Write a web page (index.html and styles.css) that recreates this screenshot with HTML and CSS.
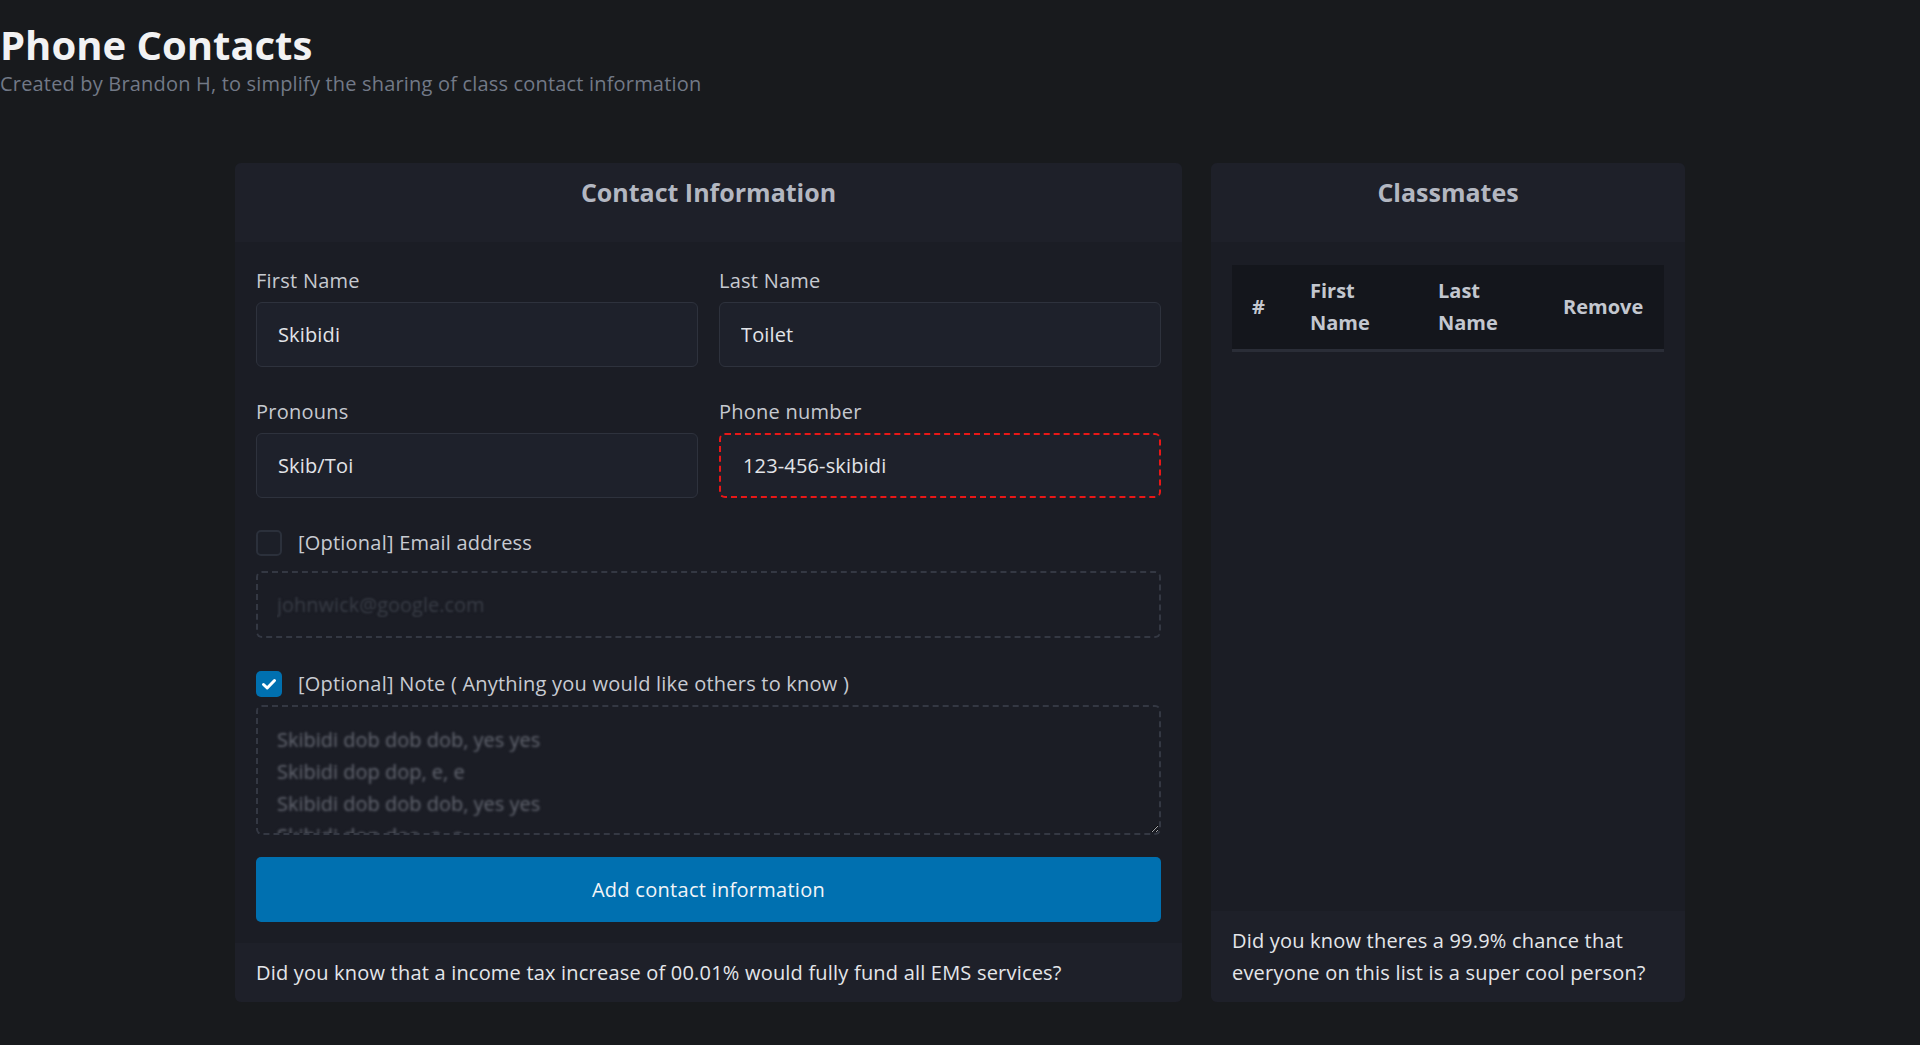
FILE: index.html
```html
<!DOCTYPE html>
<html lang="en">
<head>
<meta charset="utf-8">
<title>Phone Contacts</title>
<link rel="stylesheet" href="styles.css">
</head>
<body>
<header class="page-head">
  <h1 class="page-title">Phone Contacts</h1>
  <p class="page-sub">Created by Brandon H, to simplify the sharing of class contact information</p>
</header>
<main class="cards">
  <section class="card">
    <div class="card-head"><h2 class="card-title">Contact Information</h2></div>
    <form class="card-body form-body">
      <div class="grid2">
        <div class="field">
          <label class="field-label">First Name</label>
          <input class="text-input" type="text" value="Skibidi">
        </div>
        <div class="field">
          <label class="field-label">Last Name</label>
          <input class="text-input" type="text" value="Toilet">
        </div>
      </div>
      <div class="grid2 row-gap">
        <div class="field">
          <label class="field-label">Pronouns</label>
          <input class="text-input" type="text" value="Skib/Toi">
        </div>
        <div class="field">
          <label class="field-label">Phone number</label>
          <input class="text-input invalid" type="text" value="123-456-skibidi">
        </div>
      </div>
      <div class="check-row check-email">
        <span class="check-box"></span>
        <span class="check-label">[Optional] Email address</span>
      </div>
      <input class="dashed-input" type="text" placeholder="johnwick@google.com" disabled>
      <div class="check-row check-note">
        <span class="check-box checked">
          <svg viewBox="0 0 26 26" width="26" height="26"><polyline points="7.5,13.5 11.2,17 18.5,9.5" fill="none" stroke="#fff" stroke-width="3" stroke-linecap="round" stroke-linejoin="round"/></svg>
        </span>
        <span class="check-label">[Optional] Note ( Anything you would like others to know )</span>
      </div>
      <textarea class="dashed-area">Skibidi dob dob dob, yes yes
Skibidi dop dop, e, e
Skibidi dob dob dob, yes yes
Skibidi dop dee, e, e</textarea>
      <button class="btn-primary" type="button">Add contact information</button>
    </form>
    <div class="card-foot">Did you know that a income tax increase of 00.01% would fully fund all EMS services?</div>
  </section>
  <section class="card">
    <div class="card-head"><h2 class="card-title">Classmates</h2></div>
    <div class="card-body list-body">
      <table class="mates">
        <colgroup>
          <col class="c1"><col class="c2"><col class="c3"><col class="c4">
        </colgroup>
        <thead>
          <tr><th>#</th><th>First Name</th><th>Last Name</th><th class="nowrap">Remove</th></tr>
        </thead>
      </table>
    </div>
    <div class="card-foot">Did you know theres a 99.9% chance that everyone on this list is a super cool person?</div>
  </section>
</main>
</body>
</html>
```
FILE: styles.css
```css
* { box-sizing: border-box; }

html, body {
  margin: 0;
  padding: 0;
}

body {
  background: #181a1d;
  color: #e4e6ea;
  font-family: "Open Sans", "Noto Sans", sans-serif;
  font-size: 20px;
  min-height: 1045px;
}

.page-head {
  padding-top: 21px;
}

.page-title {
  margin: 0;
  font-size: 40px;
  line-height: 48px;
  font-weight: 700;
  color: #f2f2f3;
}

.page-sub {
  margin: 3px 0 0;
  font-size: 20px;
  letter-spacing: 0.18px;
  line-height: 24px;
  color: #727987;
}

.cards {
  width: 1450px;
  margin: 67px auto 0;
  display: grid;
  grid-template-columns: 947px 474px;
  gap: 29px;
  align-items: stretch;
}

.card {
  background: #1b1d25;
  border-radius: 6px;
  display: flex;
  flex-direction: column;
  overflow: hidden;
}

.card-head {
  background: #1e2029;
  height: 79px;
  padding-top: 14px;
  text-align: center;
}

.card-title {
  margin: 0;
  font-size: 25px;
  line-height: 30px;
  font-weight: 700;
  color: #b3b7c1;
}

.card-body {
  padding: 0 21px 21px;
  flex: 1;
}

.form-body {
  padding-top: 24px;
  display: flex;
  flex-direction: column;
}

.list-body {
  padding-top: 23px;
}

.grid2 {
  display: grid;
  grid-template-columns: 1fr 1fr;
  gap: 21px;
}

.row-gap {
  margin-top: 30px;
}

.field {
  display: flex;
  flex-direction: column;
}

.field-label {
  font-size: 20px;
  letter-spacing: 0.25px;
  line-height: 30px;
  color: #c6c9d0;
  margin-bottom: 6px;
}

.text-input {
  height: 65px;
  width: 100%;
  background: #1e212b;
  border: 1px solid #2e323d;
  border-radius: 6px;
  padding: 0 21px;
  font-family: inherit;
  font-size: 20px;
  letter-spacing: 0.15px;
  color: #e2e4e8;
  outline: none;
}

.text-input.invalid {
  border: 2px dashed #e81717;
  padding: 0 22px;
}

.check-row {
  display: flex;
  align-items: center;
  gap: 16px;
  height: 26px;
}

.check-email { margin-top: 32px; }
.check-note { margin-top: 33px; }

.check-box {
  width: 26px;
  height: 26px;
  border-radius: 5px;
  border: 2px solid #2b303b;
  background: #1c1f28;
  flex: none;
  display: flex;
}

.check-box.checked {
  border: none;
  background: #0070b0;
}

.check-label {
  font-size: 20px;
  letter-spacing: 0.22px;
  line-height: 26px;
  color: #c8cbd2;
}

.dashed-input {
  margin-top: 15px;
  height: 67px;
  width: 100%;
  background: #1b1d25;
  border: 2px dashed #343843;
  border-radius: 6px;
  padding: 0 19px;
  font-family: inherit;
  font-size: 20px;
  outline: none;
}

.dashed-input::placeholder {
  color: transparent;
  text-shadow: 0 0 2.2px rgba(58, 62, 72, 0.95);
}

.dashed-area {
  margin-top: 8px;
  height: 130px;
  width: 100%;
  background: #1b1d25;
  border: 2px dashed #343843;
  border-radius: 6px;
  padding: 17px 19px 0;
  font-family: inherit;
  font-size: 20px;
  line-height: 32px;
  color: transparent;
  text-shadow: 0 0 2.6px rgba(104, 108, 118, 0.95);
  overflow: hidden;
  resize: vertical;
  outline: none;
}

.btn-primary {
  margin-top: 22px;
  height: 65px;
  width: 100%;
  border: none;
  border-radius: 5px;
  background: #0070b0;
  color: #f2f5f8;
  font-family: inherit;
  font-size: 20px;
  letter-spacing: 0.28px;
}

.card-foot {
  background: #1e2029;
  padding: 14px 21px 13px;
  font-size: 20px;
  letter-spacing: 0.2px;
  line-height: 32px;
  color: #e4e6ea;
}

.mates {
  width: 100%;
  table-layout: fixed;
  border-collapse: collapse;
}

.mates .c1 { width: 58px; }
.mates .c2 { width: 128px; }
.mates .c3 { width: 125px; }
.mates .c4 { width: 121px; }

.mates thead tr {
  background: #14161c;
  border-bottom: 3px solid #2a2d37;
}

.mates th {
  padding: 10px 20px;
  text-align: left;
  vertical-align: middle;
  font-size: 20px;
  line-height: 32px;
  font-weight: 700;
  color: #c3c7cf;
}

.mates th.nowrap {
  white-space: nowrap;
  padding-right: 0;
}
```
